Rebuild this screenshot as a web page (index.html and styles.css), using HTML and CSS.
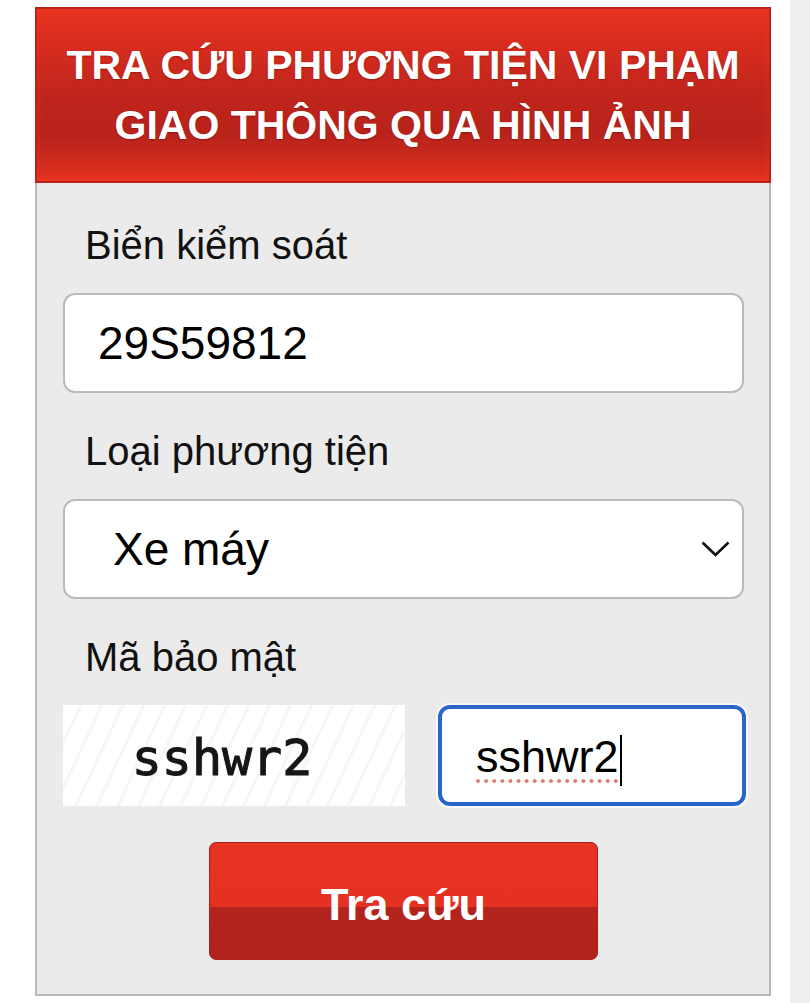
FILE: index.html
```html
<!DOCTYPE html>
<html lang="vi">
<head>
    <meta charset="UTF-8">
    <meta name="viewport" content="width=device-width, initial-scale=1.0">
    <title>Tra cứu phương tiện vi phạm giao thông</title>
    <link rel="stylesheet" href="styles.css">
</head>
<body>
    <div id="lookup">
        <h1 class="lookup-title">TRA CỨU PHƯƠNG TIỆN VI PHẠM<br>GIAO THÔNG QUA HÌNH ẢNH</h1>

        <form id="lookup-form" class="lookup-panel">
            <div class="group">
                <label class="group-label" for="plate">Biển kiểm soát</label>
                <input type="text" id="plate" class="field" name="plate" value="29S59812">
            </div>

            <div class="group">
                <label class="group-label" for="vehicle">Loại phương tiện</label>
                <div class="select-wrap">
                    <select id="vehicle" class="field field-select" name="vehicle">
                        <option>Ô tô</option>
                        <option selected>Xe máy</option>
                        <option>Xe đạp điện</option>
                    </select>
                    <!-- chevron drawn over the native arrow -->
                    <svg class="chevron" width="29" height="16" viewBox="0 0 29 16">
                        <polyline points="1.5,1.5 14.5,14 27.5,1.5" fill="none" stroke="#111" stroke-width="2.6"/>
                    </svg>
                </div>
            </div>

            <div class="group">
                <label class="group-label">Mã bảo mật</label>
                <div class="captcha-row">
                    <div class="captcha-image">sshwr2</div>
                    <div class="field field-focus">
                        <span class="typed">sshwr2</span><span class="caret"></span>
                    </div>
                </div>
            </div>

            <div class="actions">
                <button type="submit" class="btn-search">Tra cứu</button>
            </div>
        </form>
    </div>

    <div class="page-edge"></div>

    <script>
        document.getElementById('lookup-form').addEventListener('submit', function(event) {
            event.preventDefault();
        });
    </script>
</body>
</html>
```

FILE: styles.css
```css
html, body {
    margin: 0;
    padding: 0;
}

body {
    font-family: "Liberation Sans", Arial, Helvetica, sans-serif;
    background-color: #ffffff;
    color: #111;
    display: flex;
    min-height: 1003px;
    overflow: hidden;
}

#lookup {
    width: 736px;
    margin: 7px 0 0 35px;
}

.lookup-title {
    margin: 0;
    padding: 26px 0;
    border: 2px solid #b6241b;
    background: linear-gradient(to bottom, #e8331f 0%, #d72c1f 22%, #c0251c 50%, #b8231b 72%, #c9291d 86%, #e6321f 100%);
    box-shadow: inset 0 0 10px rgba(255, 60, 40, 0.35);
    color: #fff;
    font-size: 41px;
    font-weight: bold;
    line-height: 60px;
    text-align: center;
    text-shadow: 0 1px 2px rgba(80, 0, 0, 0.35);
}

.lookup-panel {
    background-color: #ebebeb;
    border: 2px solid #b8b8b8;
    border-top: none;
    padding: 40px 25px 34px 26px;
}

.group + .group,
.actions {
    margin-top: 36px;
}

.group-label {
    display: block;
    padding-left: 22px;
    margin-bottom: 25px;
    font-size: 40px;
    line-height: 45px;
    color: #111;
}

.field {
    display: block;
    box-sizing: border-box;
    width: 100%;
    height: 100px;
    padding: 0 33px;
    border: 2px solid #bababa;
    border-radius: 12px;
    background-color: #fff;
    font-family: inherit;
    font-size: 46px;
    color: #000;
    outline: none;
}

.select-wrap {
    position: relative;
}

.field-select {
    -webkit-appearance: none;
    appearance: none;
    padding-left: 48px;
}

.chevron {
    position: absolute;
    right: 14px;
    top: 42px;
    pointer-events: none;
}

.captcha-row {
    display: flex;
    gap: 33px;
    height: 101px;
    margin-right: -2px;
}

.captcha-image {
    width: 342px;
    flex-shrink: 0;
    display: flex;
    align-items: center;
    justify-content: center;
    padding-right: 24px;
    padding-top: 4px;
    box-sizing: border-box;
    background-color: #fff;
    background-image: repeating-linear-gradient(115deg, #ffffff 0px, #ffffff 14px, #f4f4f4 16px, #ffffff 19px);
    font-family: "DejaVu Sans Mono", "Liberation Mono", monospace;
    font-size: 50px;
    color: #161616;
    -webkit-text-stroke: 1px #161616;
    text-shadow: 0 0 1px rgba(0, 0, 0, 0.5);
}

.field-focus {
    flex: 1;
    height: 101px;
    display: flex;
    align-items: center;
    border: 4px solid #2a66c8;
    box-shadow: 0 0 0 2px rgba(255, 255, 255, 0.7);
    padding-left: 34px;
    padding-top: 2px;
}

.typed {
    font-size: 45px;
    text-decoration: underline dotted #e57b78;
    text-decoration-thickness: 4px;
    text-underline-offset: 8px;
}

.caret {
    display: inline-block;
    width: 2px;
    height: 51px;
    margin-left: 1px;
    margin-top: 8px;
    background-color: #000;
}

.actions {
    display: flex;
    justify-content: center;
}

.btn-search {
    width: 389px;
    height: 118px;
    padding-top: 8px;
    border: 1px solid #a9211b;
    border-radius: 7px;
    background: linear-gradient(to bottom, #e63323 0%, #e43122 55%, #b3241e 55%, #b2231d 100%);
    color: #fff;
    font-family: inherit;
    font-size: 45px;
    font-weight: bold;
    cursor: pointer;
}

.btn-search:hover {
    background: linear-gradient(to bottom, #d42c1e 0%, #d22a1e 55%, #a11f1a 55%, #a01e19 100%);
}

.page-edge {
    width: 20px;
    margin-left: auto;
    background-color: #efefef;
}
```
